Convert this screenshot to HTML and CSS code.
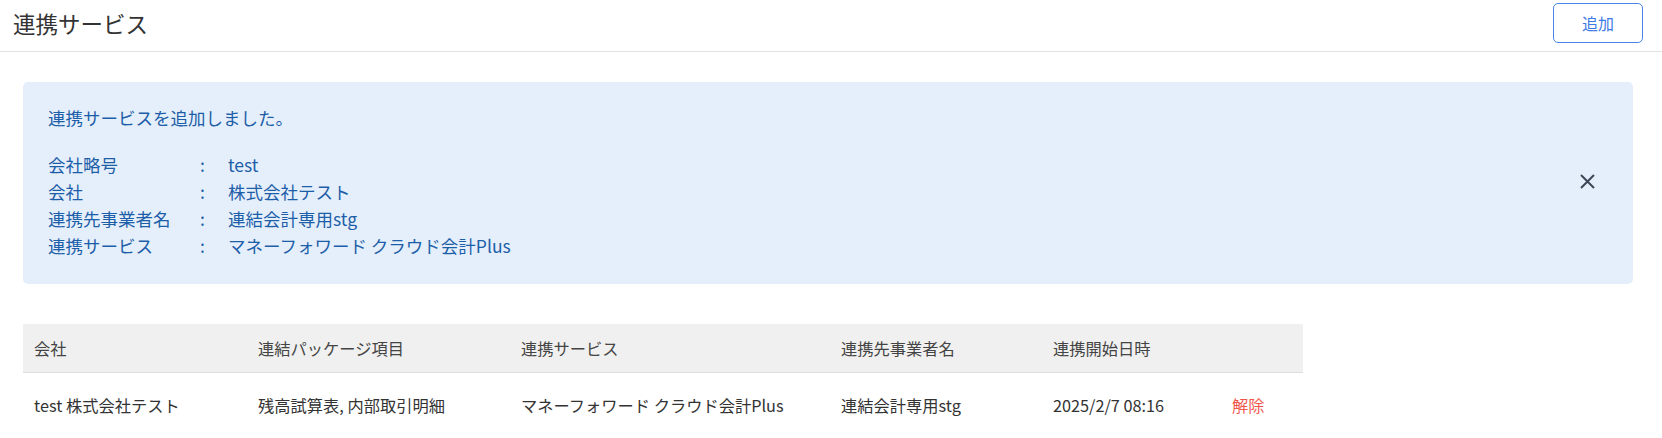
FILE: index.html
```html
<!DOCTYPE html>
<html lang="ja">
<head>
    <meta charset="UTF-8">
    <meta name="viewport" content="width=device-width, initial-scale=1.0">
    <title>連携サービス</title>
    <link rel="stylesheet" href="styles.css">
</head>
<body>
    <header class="cabecalho">
        <h1 class="titulo">連携サービス</h1>
        <button class="botao-adicionar">追加</button>
    </header>

    <main class="conteudo">
        <div class="alerta">
            <div class="alerta-corpo">
                <p class="alerta-mensagem">連携サービスを追加しました。</p>
                <dl class="alerta-lista">
                    <dt>会社略号</dt><dd class="dois-pontos">:</dd><dd>test</dd>
                    <dt>会社</dt><dd class="dois-pontos">:</dd><dd>株式会社テスト</dd>
                    <dt>連携先事業者名</dt><dd class="dois-pontos">:</dd><dd>連結会計専用stg</dd>
                    <dt>連携サービス</dt><dd class="dois-pontos">:</dd><dd>マネーフォワード クラウド会計Plus</dd>
                </dl>
            </div>
            <button class="fechar" aria-label="閉じる">
                <svg width="15" height="15" viewBox="0 0 15 15">
                    <path d="M1 1 L14 14 M14 1 L1 14" stroke="#3d4757" stroke-width="2" fill="none"/>
                </svg>
            </button>
        </div>

        <table class="tabela">
            <colgroup>
                <col style="width: 224px">
                <col style="width: 263px">
                <col style="width: 320px">
                <col style="width: 212px">
                <col style="width: 179px">
                <col style="width: 82px">
            </colgroup>
            <thead>
                <tr>
                    <th>会社</th>
                    <th>連結パッケージ項目</th>
                    <th>連携サービス</th>
                    <th>連携先事業者名</th>
                    <th>連携開始日時</th>
                    <th></th>
                </tr>
            </thead>
            <tbody>
                <tr>
                    <td>test 株式会社テスト</td>
                    <td>残高試算表, 内部取引明細</td>
                    <td>マネーフォワード クラウド会計Plus</td>
                    <td>連結会計専用stg</td>
                    <td>2025/2/7 08:16</td>
                    <td><a class="remover" href="#">解除</a></td>
                </tr>
            </tbody>
        </table>
    </main>
</body>
</html>
```

FILE: styles.css
```css
body{
    margin: 0;
    padding: 0;
    background-color: #ffffff;
    font-family: "Noto Sans CJK JP", "Noto Sans", sans-serif;
    color: #333333;
}

.cabecalho{
    display: flex;
    justify-content: space-between;
    align-items: center;
    height: 52px;
    box-sizing: border-box;
    padding: 3px 19px 9px 13px;
    border-bottom: 1px solid #e2e2e2;
}

.titulo{
    margin: 0;
    font-size: 22.5px;
    font-weight: normal;
    line-height: 30px;
    color: #333333;
}

.botao-adicionar{
    width: 90px;
    height: 40px;
    border: 1px solid #4a86e8;
    border-radius: 5px;
    background-color: #ffffff;
    color: #3f7be6;
    font-family: inherit;
    font-size: 16px;
    cursor: pointer;
}

.conteudo{
    padding: 30px 29px 0 23px;
}

.alerta{
    display: flex;
    align-items: center;
    background-color: #e5effb;
    border-radius: 5px;
    padding: 22px 38px 25px 25px;
    color: #1d5ea8;
    font-size: 17.5px;
    line-height: 27px;
}

.alerta-corpo{
    flex: 1;
}

.alerta-mensagem{
    margin: 0 0 20px 0;
}

.alerta-lista{
    display: grid;
    grid-template-columns: 152px 28px auto;
    margin: 0;
}

.alerta-lista dt,
.alerta-lista dd{
    margin: 0;
}

.fechar{
    display: flex;
    padding: 0;
    border: none;
    background: none;
    cursor: pointer;
}

.tabela{
    margin-top: 40px;
    width: 1280px;
    border-collapse: collapse;
    table-layout: fixed;
    font-size: 16.25px;
    line-height: 24px;
}

.tabela th{
    background-color: #f0f0f0;
    color: #444444;
    font-weight: normal;
    text-align: left;
    padding: 12px 11px;
    border-bottom: 1px solid #dedede;
}

.tabela td{
    padding: 20px 11px;
    color: #333333;
}

.remover{
    color: #f0564c;
    text-decoration: none;
}
```
